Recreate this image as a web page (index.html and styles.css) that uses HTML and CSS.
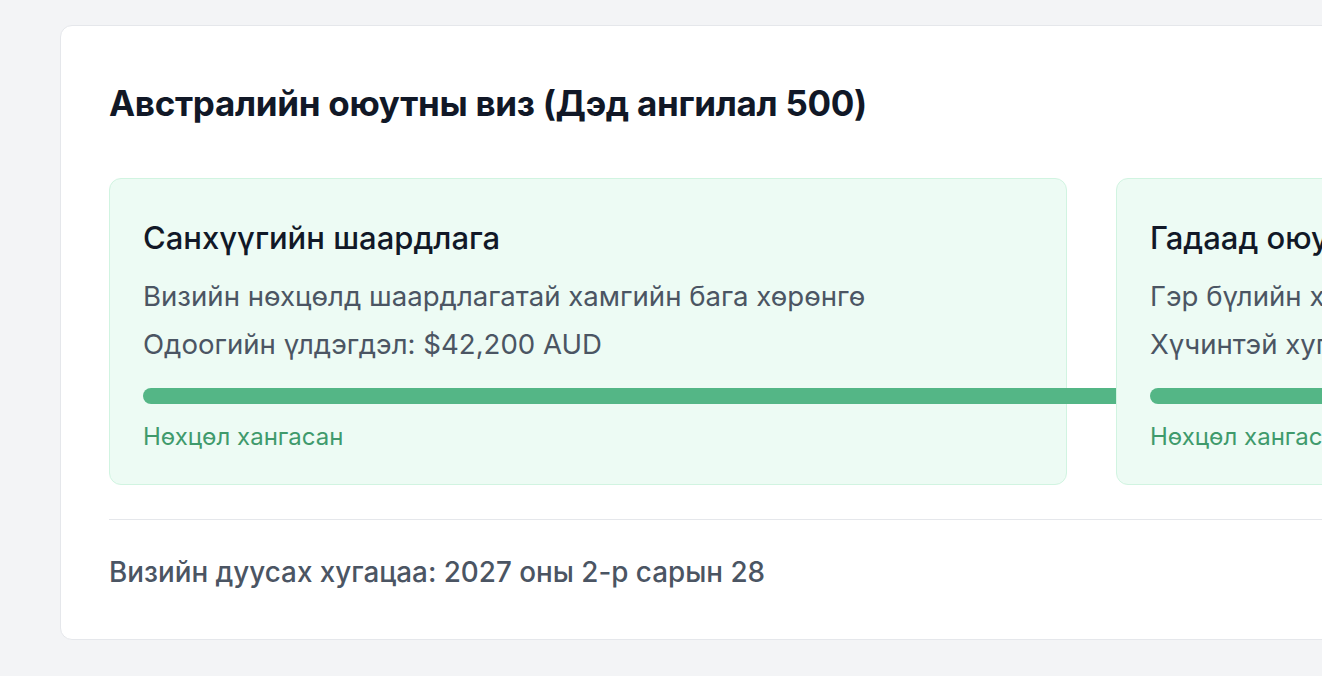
FILE: index.html
```html
<!DOCTYPE html>
<html lang="mn">
<head>
<meta charset="utf-8">
<title>Австралийн оюутны виз</title>
<link rel="stylesheet" href="styles.css">
</head>
<body>
<main class="panel">
  <h1 class="panel-title">Австралийн оюутны виз (Дэд ангилал 500)</h1>
  <div class="req-grid">
    <section class="req-card">
      <h2 class="req-title">Санхүүгийн шаардлага</h2>
      <p class="req-text">Визийн нөхцөлд шаардлагатай хамгийн бага хөрөнгө</p>
      <p class="req-text">Одоогийн үлдэгдэл: $42,200 AUD</p>
      <div class="track"><div class="fill" style="width: 142%"></div></div>
      <p class="req-status">Нөхцөл хангасан</p>
    </section>
    <section class="req-card">
      <h2 class="req-title">Гадаад оюутны эрүүл мэндийн даатгал (OSHC)</h2>
      <p class="req-text">Гэр бүлийн хамрагдалттай даатгал</p>
      <p class="req-text">Хүчинтэй хугацаа: 2027 оны 3-р сар хүртэл</p>
      <div class="track"><div class="fill" style="width: 100%"></div></div>
      <p class="req-status">Нөхцөл хангасан</p>
    </section>
  </div>
  <hr class="divider">
  <p class="expiry">Визийн дуусах хугацаа: 2027 оны 2-р сарын 28</p>
</main>
</body>
</html>
```
FILE: styles.css
```css
html, body {
  margin: 0;
  padding: 0;
}
body {
  background: #f3f4f6;
  font-family: Inter, "Noto Sans", "DejaVu Sans", sans-serif;
  overflow: hidden;
  padding: 25px 0 0 60px;
}
.panel {
  box-sizing: border-box;
  width: max-content;
  background: #ffffff;
  border: 1px solid #e5e7eb;
  border-radius: 12px;
  padding: 57px 48px 51px;
}
.panel-title {
  margin: 0;
  font-size: 35px;
  line-height: 40px;
  font-weight: 700;
  letter-spacing: -0.3px;
  color: #111827;
}
.req-grid {
  margin-top: 55px;
  display: grid;
  grid-template-columns: 958px 958px;
  gap: 49px;
}
.req-card {
  box-sizing: border-box;
  background: #edfbf4;
  border: 1px solid #d1f4e1;
  border-radius: 12px;
  padding: 41px 33px 33px;
}
.req-title {
  margin: 0;
  font-size: 31px;
  line-height: 36px;
  font-weight: 500;
  color: #111827;
}
.req-text {
  margin: 16px 0 0;
  font-size: 27.6px;
  line-height: 32px;
  color: #4b5563;
}
.req-title + .req-text {
  margin-top: 24px;
}
.track {
  margin-top: 28px;
  height: 16px;
  border-radius: 8px;
}
.fill {
  height: 16px;
  border-radius: 8px;
  background: #54b686;
}
.req-status {
  margin: 19px 0 0;
  font-size: 24px;
  line-height: 28px;
  color: #3f9a6c;
}
.divider {
  margin: 34px 0 0;
  border: 0;
  border-top: 1px solid #e5e7eb;
  height: 0;
}
.expiry {
  margin: 36px 0 0;
  font-size: 27.8px;
  line-height: 32px;
  font-weight: 500;
  color: #4b5563;
}
```
